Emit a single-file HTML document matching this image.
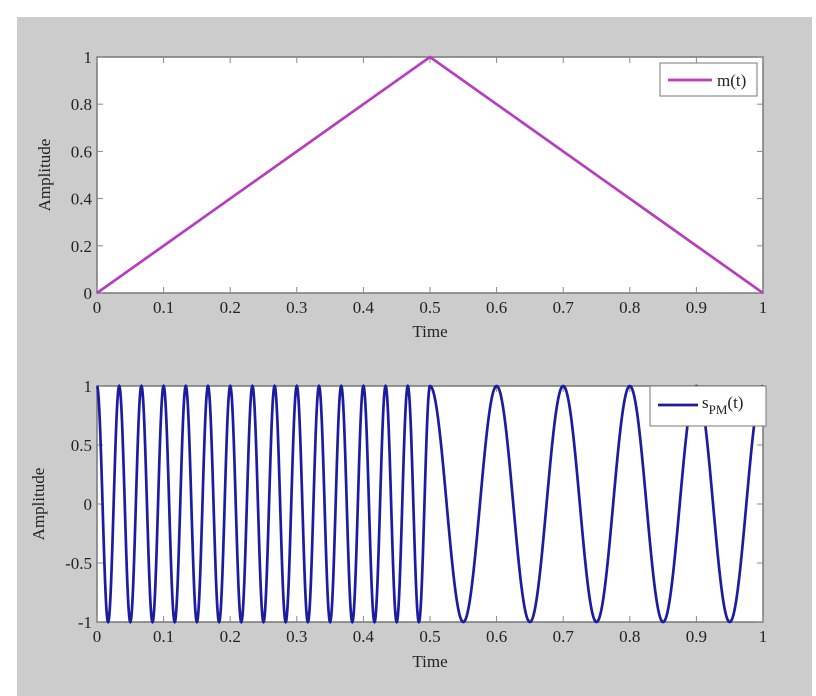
<!DOCTYPE html>
<html><head><meta charset="utf-8"><style>
html,body{margin:0;padding:0;background:#fff;width:816px;height:696px;overflow:hidden}
svg{display:block}
text{font-family:"Liberation Serif",serif;fill:#222;font-size:17px}
</style></head><body>
<svg id="s" width="816" height="696" xmlns="http://www.w3.org/2000/svg">
<rect x="17" y="17" width="795" height="679" fill="#cccccc"/>
<rect x="97" y="57" width="666" height="236" fill="#fff" stroke="#777" stroke-width="1.5"/>
<rect x="97" y="386" width="666" height="236" fill="#fff" stroke="#777" stroke-width="1.5"/>
<g id="ticks" stroke="#888" stroke-width="1"></g>
<g id="labels"></g>
<polyline points="97,293 430,57 763,293" fill="none" stroke="#b83cc0" stroke-width="2.7"/>
<path id="pm" fill="none" stroke="#1c1ca0" stroke-width="2.7"/>
<text x="50" y="175" text-anchor="middle" transform="rotate(-90 50 175)">Amplitude</text>
<text x="44" y="504" text-anchor="middle" transform="rotate(-90 44 504)">Amplitude</text>
<text x="430" y="337" text-anchor="middle">Time</text>
<text x="430" y="667" text-anchor="middle">Time</text>
<rect x="660" y="63" width="97" height="33" fill="#fff" stroke="#777" stroke-width="1"/>
<line x1="668" y1="80" x2="712" y2="80" stroke="#b83cc0" stroke-width="2.7"/>
<text x="717" y="86">m(t)</text>
<rect x="650" y="386" width="116" height="40" fill="#fff" stroke="#777" stroke-width="1"/>
<line x1="658" y1="405" x2="698" y2="405" stroke="#1c1ca0" stroke-width="2.7"/>
<text x="702" y="408">s<tspan font-size="13" dy="6">PM</tspan><tspan dy="-6">(t)</tspan></text>
</svg>
<script>
var ns="http://www.w3.org/2000/svg",T=document.getElementById('ticks'),L=document.getElementById('labels');
function ln(a,b,c,d){var e=document.createElementNS(ns,'line');e.setAttribute('x1',a);e.setAttribute('y1',b);e.setAttribute('x2',c);e.setAttribute('y2',d);T.appendChild(e);}
function tx(x,y,s,anc){var e=document.createElementNS(ns,'text');e.setAttribute('x',x);e.setAttribute('y',y);e.setAttribute('text-anchor',anc);e.textContent=s;L.appendChild(e);}
[[57,293],[386,622]].forEach(function(a){
 for(var i=0;i<=10;i++){var x=97+66.6*i;ln(x,a[1],x,a[1]-6);ln(x,a[0],x,a[0]+6);
  tx(x,a[1]+20,i==0?'0':i==10?'1':'0.'+i,'middle');}
});
var yl=['0','0.2','0.4','0.6','0.8','1'];
for(var i=0;i<=5;i++){var y=293-236*i/5;ln(97,y,103,y);ln(763,y,757,y);tx(92,y+6,yl[i],'end');}
var yl2=['-1','-0.5','0','0.5','1'];
for(var i=0;i<=4;i++){var y=622-236*i/4;ln(97,y,103,y);ln(763,y,757,y);tx(92,y+6,yl2[i],'end');}
var d='';for(var k=0;k<=3000;k++){var t=k/3000,m=t<0.5?2*t:2-2*t;var v=Math.cos(40*Math.PI*t+10*Math.PI*m);
d+=(k?'L':'M')+(97+666*t).toFixed(2)+','+(504-118*v).toFixed(2);}
document.getElementById('pm').setAttribute('d',d);
</script>
</body></html>
